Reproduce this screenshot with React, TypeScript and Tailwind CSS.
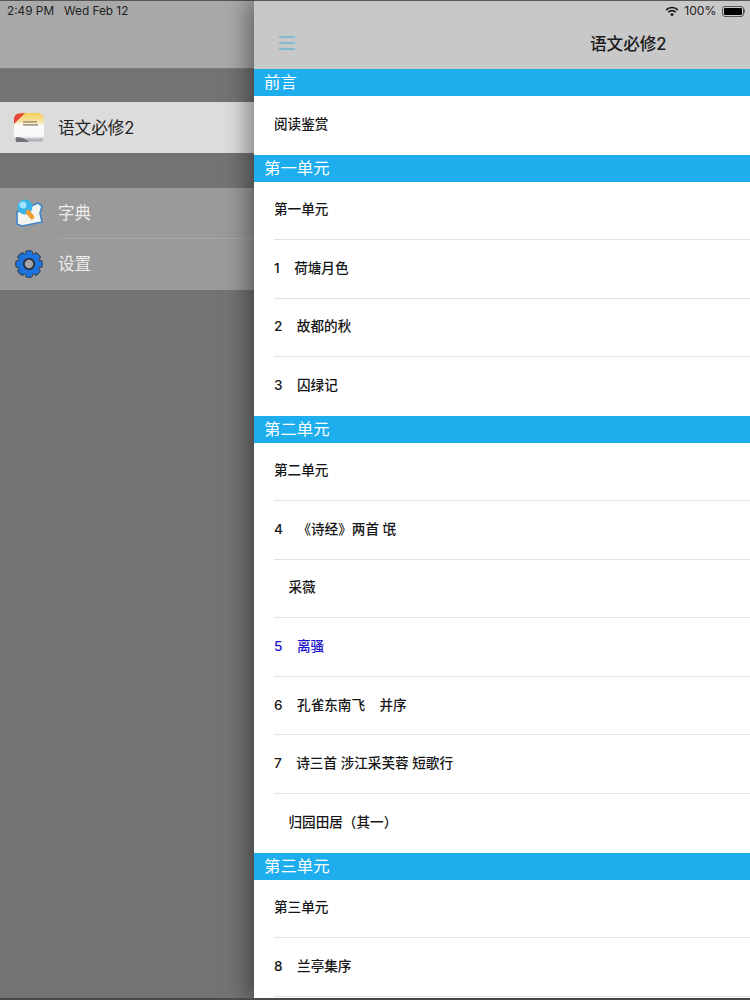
import React from "react";

const FONT = "[font-family:'Inter','Noto_Sans_CJK_SC',sans-serif]";

function BookIcon() {
  return (
    <svg width="30" height="30" viewBox="0 0 30 30" className="blur-[0.4px]">
      <defs>
        <linearGradient id="bk" x1="0" y1="0" x2="0" y2="1">
          <stop offset="0" stopColor="#f6cf55" />
          <stop offset="0.28" stopColor="#f7e3a4" />
          <stop offset="0.42" stopColor="#fbfbfb" />
          <stop offset="0.78" stopColor="#f8f8f8" />
          <stop offset="0.9" stopColor="#a5a7ad" />
          <stop offset="1" stopColor="#e4e4e6" />
        </linearGradient>
        <clipPath id="bkc"><rect x="0" y="0" width="30" height="30" rx="6" /></clipPath>
      </defs>
      <g clipPath="url(#bkc)">
        <rect width="30" height="30" fill="url(#bk)" />
        <rect x="9" y="8" width="14" height="1.8" fill="#8b8468" opacity="0.7" />
        <rect x="9" y="11" width="15" height="1.8" fill="#8b8468" opacity="0.75" />
        <path d="M2 24 Q10 24 15 29 L2 29 Z" fill="#5a5b62" opacity="0.75" />
        <polygon points="0,1 11,0 0,11" fill="#e8443a" />
      </g>
    </svg>
  );
}

function DictIcon() {
  return (
    <svg width="30" height="30" viewBox="0 0 30 30" className="blur-[0.3px]">
      <path d="M3 14 L24 5 L28 8 L26 15 L28 24 L18 26 L8 28 L3 26 Z" fill="#f3f3f0" stroke="#3f86c9" strokeWidth="1.6" strokeLinejoin="round" />
      <circle cx="11" cy="9" r="7.5" fill="#38b4ea" />
      <circle cx="9" cy="7" r="3.5" fill="#9fe2fb" />
      <path d="M14 14 L18 19" stroke="#f0a030" strokeWidth="4.5" strokeLinecap="round" />
    </svg>
  );
}

function GearIcon() {
  const teeth = [0, 45, 90, 135, 180, 225, 270, 315];
  return (
    <svg width="28" height="28" viewBox="0 0 28 28">
      <g stroke="#2f3a48" strokeWidth="1">
        {teeth.map((a) => (
          <rect key={a} x="10.5" y="0.8" width="7" height="6" rx="1.6" fill="#1c74e0" transform={`rotate(${a} 14 14)`} />
        ))}
      </g>
      <circle cx="14" cy="14" r="10.5" fill="#1c74e0" />
      <circle cx="14" cy="14" r="6.2" fill="#2a3340" />
      <circle cx="14" cy="14" r="4.2" fill="#a3a5a8" />
    </svg>
  );
}

function SideRow({ icon, label, active, line }: { icon: React.ReactNode; label: string; active?: boolean; line?: boolean }) {
  return (
    <div className={`flex items-center h-[51px] ${active ? "bg-[#dcdcdd] text-[#222]" : "text-[#ececec]"}`}>
      <div className={`w-[58px] shrink-0 flex justify-center pr-[1px] ${active ? "" : "pb-[2px]"}`}>{icon}</div>
      <div className={`flex-1 h-full flex items-center text-[16.6px] ${active ? "pt-[2px]" : ""} ${line ? "border-b border-[#a6a6a6]" : ""}`}>{label}</div>
    </div>
  );
}

function Section({ title }: { title: string }) {
  return <div className="h-[27px] bg-[#1eaeed] text-white text-[16.4px] leading-[27px] pl-[10px]">{title}</div>;
}

function Row({ text, blue, last }: { text: string; blue?: boolean; last?: boolean }) {
  return (
    <div className="h-[58.56px] shrink-0 pl-[20px]">
      <div className={`h-full flex items-center pb-[2px] whitespace-pre text-[13.6px] font-medium ${last ? "" : "border-b border-[#e2e2e2]"} ${blue ? "text-[#1c12cc]" : "text-[#151515]"}`}>
        {text}
      </div>
    </div>
  );
}

export default function App() {
  return (
    <div className={`relative w-[750px] h-[1000px] overflow-hidden flex bg-[#737373] ${FONT}`}>
      <div className="w-[254px] shrink-0 flex flex-col border-t border-[#555]">
        <div className="h-[68px] bg-[#a9a9a9] border-b border-[#7d7d7d] px-[7px] pt-[2px] text-[11.8px] leading-[16px] text-[#222] whitespace-pre">
          2:49 PM   Wed Feb 12
        </div>
        <div className="h-[33px]" />
        <SideRow active icon={<BookIcon />} label="语文必修2" />
        <div className="h-[35px]" />
        <div className="bg-[#9a9a9a]">
          <SideRow line icon={<DictIcon />} label="字典" />
          <SideRow icon={<GearIcon />} label="设置" />
        </div>
      </div>

      <div className="relative flex-1 flex flex-col bg-white shadow-[-6px_0_22px_rgba(0,0,0,0.42)]">
        <div className="h-[69px] shrink-0 bg-[#c8c8c9] border-t border-[#555] flex flex-col">
          <div className="h-[19px] pt-[1px] flex items-center justify-end pr-[5px] gap-[5px] text-[12.2px] text-[#222]">
            <svg width="14" height="11" viewBox="0 0 14 11" fill="none" stroke="#151515">
              <path d="M1 4 A8.5 8.5 0 0 1 13 4" strokeWidth="1.7" />
              <path d="M3.2 6.2 A5.4 5.4 0 0 1 10.8 6.2" strokeWidth="1.7" />
              <path d="M7 10.5 L5 8.3 A2.8 2.8 0 0 1 9 8.3 Z" fill="#151515" stroke="none" />
            </svg>
            <span>100%</span>
            <div className="flex items-center">
              <div className="w-[22px] h-[11px] border border-[#555] rounded-[3px] p-[1px]">
                <div className="w-full h-full bg-black rounded-[1px]" />
              </div>
              <div className="w-[1.5px] h-[4px] bg-[#666]" />
            </div>
          </div>
          <div className="relative flex-1 flex items-center">
            <svg width="17" height="14" viewBox="0 0 17 14" className="ml-[24px] mt-[-4px]" stroke="#3fa9dc" strokeWidth="1">
              <path d="M1 1 H17 M1 7 H17 M1 13 H17" />
            </svg>
            <div className="absolute left-[336px] top-[12px] text-[16.6px] font-medium text-[#1a1a1a]">语文必修2</div>
          </div>
        </div>
        <Section title="前言" />
        <Row text="阅读鉴赏" last />
        <Section title="第一单元" />
        <Row text="第一单元" />
        <Row text="1    荷塘月色" />
        <Row text="2    故都的秋" />
        <Row text="3    囚绿记" last />
        <Section title="第二单元" />
        <Row text="第二单元" />
        <Row text="4    《诗经》两首 氓" />
        <Row text="    采薇" />
        <Row blue text="5    离骚" />
        <Row text="6    孔雀东南飞    并序" />
        <Row text="7    诗三首 涉江采芙蓉 短歌行" />
        <Row text="    归园田居（其一）" last />
        <Section title="第三单元" />
        <Row text="第三单元" />
        <Row text="8    兰亭集序" />
      </div>
      <div className="absolute left-0 right-0 bottom-0 h-[2px] bg-[#4a4a4a]" />
    </div>
  );
}
